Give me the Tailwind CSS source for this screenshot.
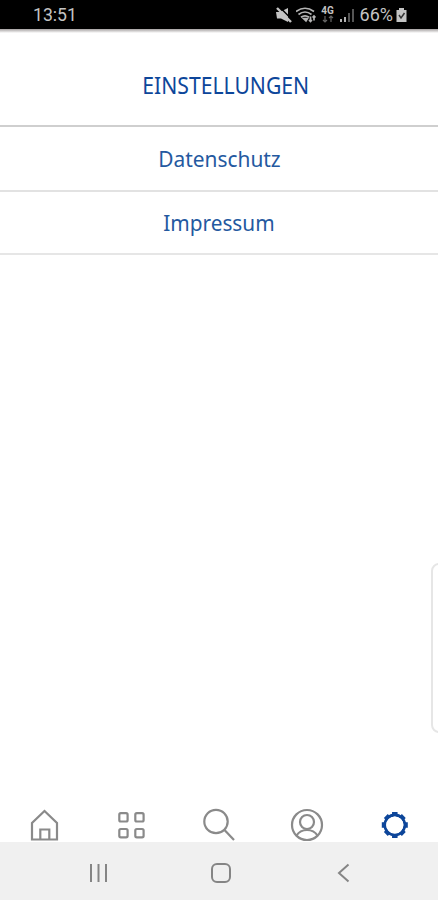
<!DOCTYPE html>
<html lang="de">
<head>
    <meta charset="UTF-8">
    <meta name="viewport" content="width=device-width, initial-scale=1.0">
    <title>Einstellungen</title>
    <script src="https://cdn.jsdelivr.net/npm/@tailwindcss/browser@4"></script>
</head>
<body class="bg-white">
    <div class="relative flex flex-col h-screen overflow-hidden font-['Noto_Sans',sans-serif]">

        <!-- Statusleiste -->
        <div class="flex h-[29px] shrink-0 items-center justify-between bg-black pl-[33px] pr-[31px] font-[Roboto,sans-serif] text-[18px] text-[#c4c4c4]">
            <span class="inline-block origin-left scale-x-[.98] leading-none pt-px">13:51</span>
            <div class="flex items-center pt-px">
                <svg class="h-4 w-4" viewBox="0 0 16 16" fill="#c4c4c4">
                    <path d="M0 5h4l8-4v14L5 11.500H1z"/>
                    <path d="M3.500 0L16 12.500" stroke="#000" stroke-width="1.500"/>
                    <path d="M1 1l14 14" stroke="#c4c4c4" stroke-width="2.400"/>
                </svg>
                <svg class="ml-1 h-4 w-[21px]" viewBox="0 0 21 16" fill="none" stroke="#b4b4b4" stroke-width="1.700">
                    <path d="M0 4.500q9-6.500 18 0M2.500 7.500q6.500-5 13 0M5 10.300q4-3 8 0"/>
                    <path d="M7.500 11.500h4L10 14z" fill="#b4b4b4"/>
                    <path d="M14.500 9.500v5M13 13l1.500 1.500L16 13M18 13.500V9M16.500 10.500L18 9l1.500 1.500"/>
                </svg>
                <div class="ml-1 flex w-[14px] flex-col items-center">
                    <span class="text-[10px] font-bold leading-[8px]">4G</span>
                    <svg class="h-[8px] w-3" viewBox="0 0 12 8" fill="none" stroke="#666" stroke-width="1.200">
                        <path d="M3 1v6M1 5l2 2 2-2M9 7V1M7 3l2-2 2 2"/>
                    </svg>
                </div>
                <svg class="ml-[5px] h-4 w-[15px]" viewBox="0 0 15 16">
                    <path d="M0 12h2v3H0zM4 10h2v5H4z" fill="#b4b4b4"/>
                    <path d="M8 6h2v9H8zM12 2h2v13h-2z" fill="#555"/>
                </svg>
                <span class="ml-[5px] inline-block leading-none">66%</span>
                <svg class="ml-[3px] h-4 w-[11px]" viewBox="0 0 11 16">
                    <path d="M3 1h5v2h2.500v12h-10V3H3z" fill="#c4c4c4"/>
                    <path d="M3 8l2 3 3.500-5" fill="none" stroke="#333" stroke-width="1.500"/>
                </svg>
            </div>
        </div>
        <div class="h-1 shrink-0 bg-linear-to-b from-[#a5a1a1] to-white"></div>

        <header class="flex h-[94px] shrink-0 items-center justify-center border-b-2 border-[#cfcfcf] pl-[13px] pt-[12px]">
            <h1 class="scale-x-[.92] whitespace-nowrap text-[23px] leading-none text-[#0d469a]">EINSTELLUNGEN</h1>
        </header>

        <main class="flex-1 text-[22px] text-[#2459a0]">
            <a class="flex h-[65px] items-center justify-center border-b-2 border-[#e2e2e2]"><span class="inline-block scale-x-[.95]">Datenschutz</span></a>
            <a class="flex h-[63px] items-center justify-center border-b-2 border-[#e6e6e6]"><span class="inline-block scale-x-[.945]">Impressum</span></a>
        </main>

        <div class="absolute left-[431px] top-[563px] h-[170px] w-8 rounded-lg border-2 border-[#e6e6e6]"></div>

        <!-- Tableiste -->
        <nav class="grid h-[34px] shrink-0 grid-cols-5 justify-items-center text-[#8a8a8a]">
            <svg class="h-[34px] w-[34px]" viewBox="0 0 34 34" fill="none" stroke="currentColor" stroke-width="2.200">
                <path d="M5 31.500V15L17.500 3 30 15v16.500zM13.300 31V21.500h9V31"/>
            </svg>
            <svg class="h-[34px] w-[34px]" viewBox="0 0 34 34" fill="none" stroke="currentColor" stroke-width="2.200">
                <rect x="5.300" y="5.200" width="8.300" height="8.300" rx="1.500"/>
                <rect x="21.300" y="5.200" width="8.300" height="8.300" rx="1.500"/>
                <rect x="5.300" y="21" width="8.300" height="8.300" rx="1.500"/>
                <rect x="21.300" y="21" width="8.300" height="8.300" rx="1.500"/>
            </svg>
            <svg class="h-[34px] w-[34px]" viewBox="0 0 34 34" fill="none" stroke="currentColor" stroke-width="2.200">
                <circle cx="14" cy="13.500" r="11.700"/>
                <path d="M22.500 22L32 32"/>
            </svg>
            <svg class="h-[34px] w-[34px]" viewBox="0 0 34 34" fill="none" stroke="currentColor" stroke-width="2.200">
                <circle cx="17" cy="17" r="15"/>
                <circle cx="17" cy="14" r="7"/>
                <path d="M6.500 27.500Q10 22 17 22t10.500 5.500"/>
            </svg>
            <svg class="h-[34px] w-[34px] text-[#0d469a]" viewBox="0 0 34 34" fill="none" stroke="currentColor">
                <circle cx="17.800" cy="17" r="10" stroke-width="2.800"/>
                <path stroke-width="5.500" d="M17.800 7.500V4M17.800 26.500V30M8.300 17H4.800M27.300 17h3.500M11 10.200L8.800 8M24.600 10.200L26.800 8M11 23.800L8.800 26M24.600 23.800l2.200 2.200"/>
                <circle cx="17.800" cy="17" r="8.600" fill="#fff" stroke="none"/>
            </svg>
        </nav>

        <!-- Android-Navigation -->
        <div class="flex h-[58px] shrink-0 items-center bg-[#f0f0f0] pl-[88px] pt-[3px] text-[#858585]">
            <svg class="h-[22px] w-[22px]" viewBox="0 0 22 22" stroke="currentColor" stroke-width="2">
                <path d="M3 2v18M10.500 2v18M18 2v18"/>
            </svg>
            <svg class="ml-[100px] h-[22px] w-[22px]" viewBox="0 0 22 22" fill="none" stroke="currentColor" stroke-width="2">
                <rect x="2" y="2" width="18" height="18" rx="5"/>
            </svg>
            <svg class="ml-[100px] h-[22px] w-[22px]" viewBox="0 0 22 22" fill="none" stroke="currentColor" stroke-width="2">
                <path d="M16.500 2.500L7 11l9.500 8.500"/>
            </svg>
        </div>
    </div>
</body>
</html>
